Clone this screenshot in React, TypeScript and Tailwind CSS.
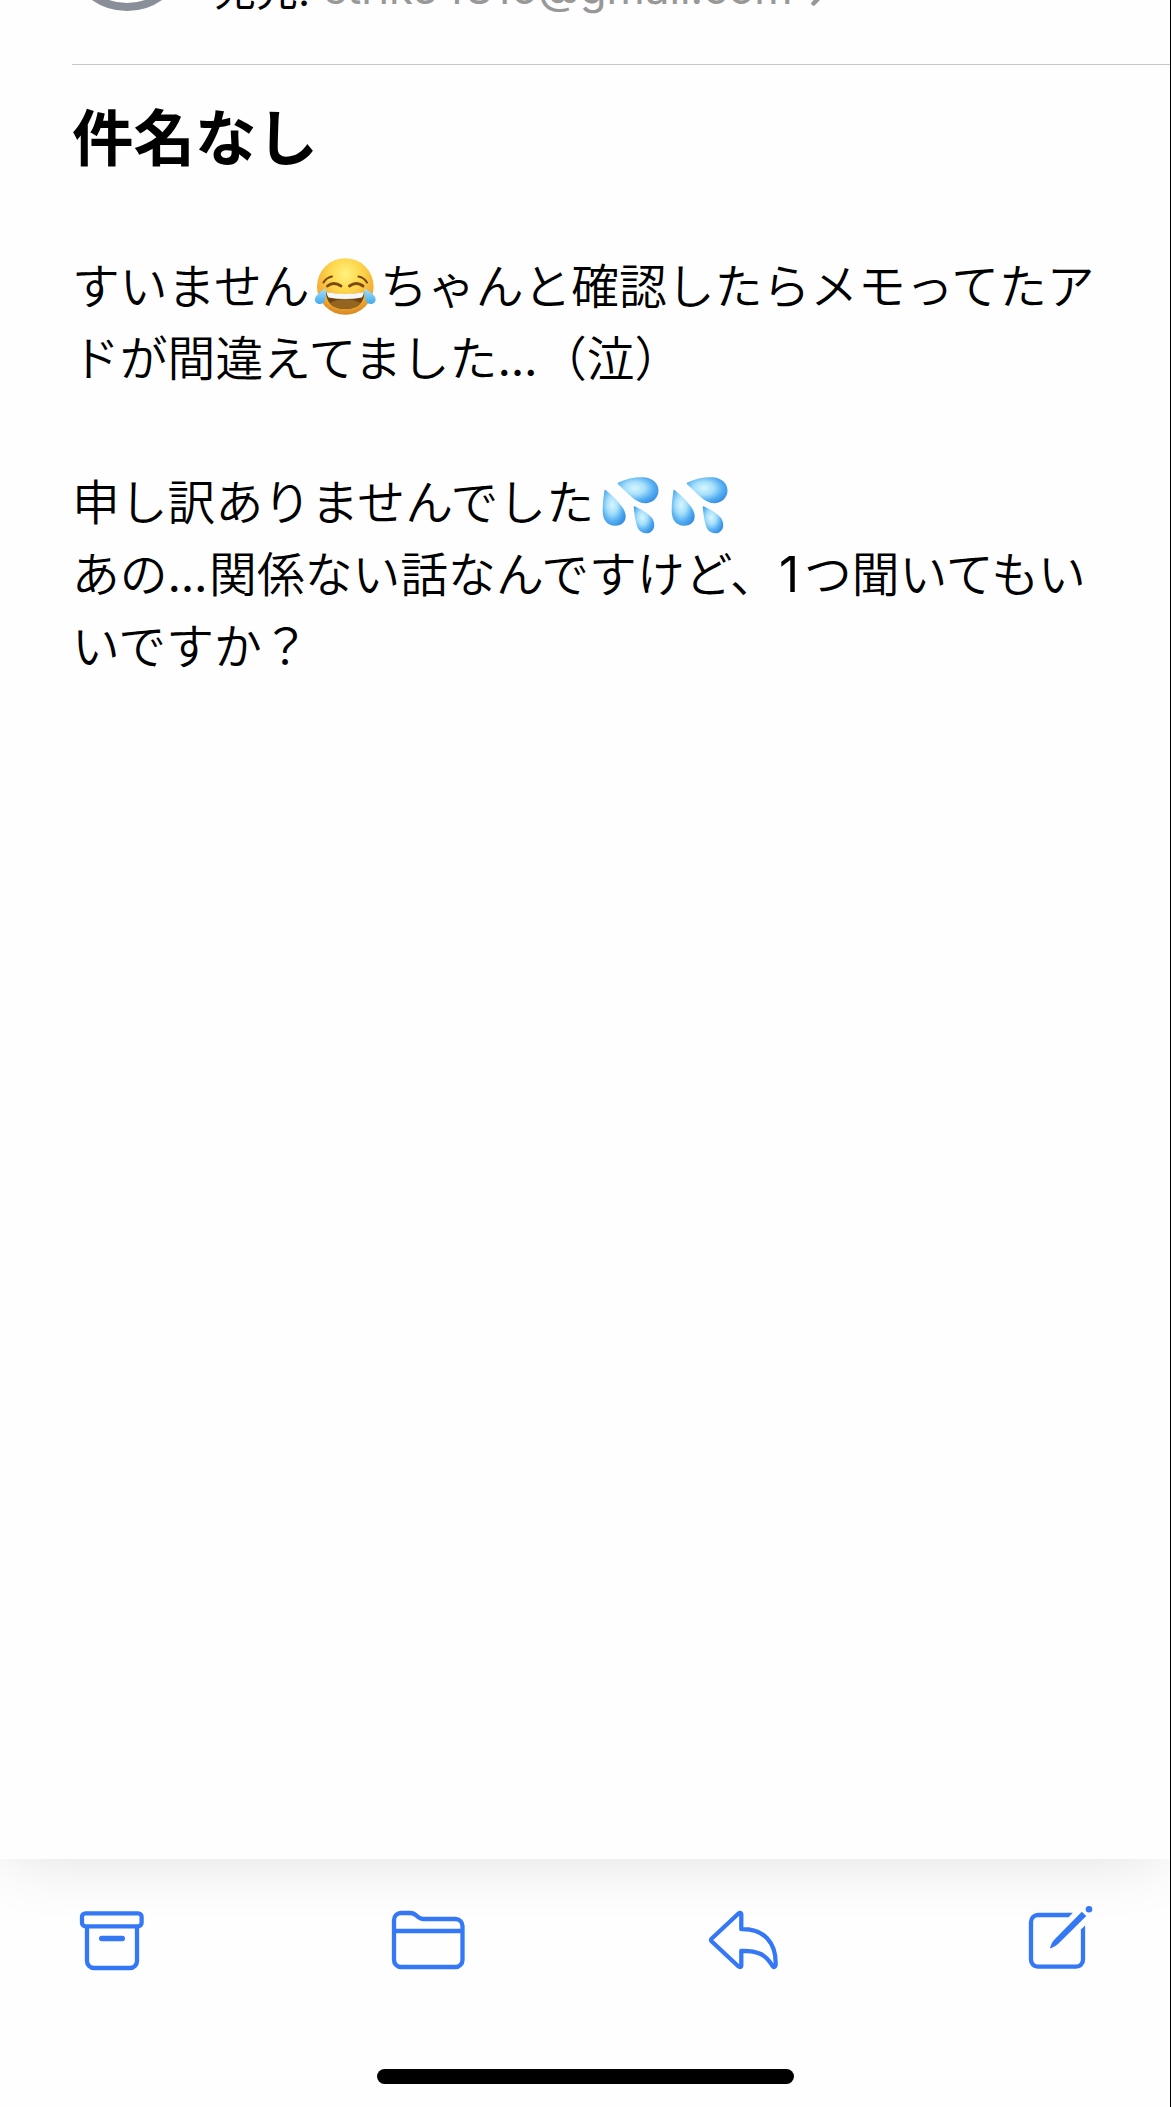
import type { ReactNode } from 'react';

interface IconProps {
  label: string;
  children: ReactNode;
}

// ツールバー用アイコンの共通枠
function ToolbarIcon({ label, children }: IconProps) {
  return (
    <button aria-label={label} className="h-[72px] w-[72px] text-[#3478f6]">
      <svg
        viewBox="0 0 72 72"
        className="h-[72px] w-[72px] overflow-visible"
        fill="none"
        stroke="currentColor"
        strokeWidth="4.3"
        strokeLinejoin="round"
      >
        {children}
      </svg>
    </button>
  );
}

function JoyEmoji() {
  return (
    <span className="inline-block h-[72px] w-[70.5px] pt-[3px] align-top">
      <svg viewBox="0 0 72 72" className="h-[72px] w-[72px]" role="img" aria-label="😂">
        <defs>
          <radialGradient id="face" cx="0.5" cy="0.28" r="0.75">
            <stop offset="0" stopColor="#fff27c" />
            <stop offset="0.4" stopColor="#fdd54a" />
            <stop offset="0.75" stopColor="#f2aa34" />
            <stop offset="1" stopColor="#d07f20" />
          </radialGradient>
          <linearGradient id="tear" x1="0" y1="0" x2="0" y2="1">
            <stop offset="0" stopColor="#a9e2fb" />
            <stop offset="1" stopColor="#3fa9ee" />
          </linearGradient>
        </defs>
        <circle cx="35.3" cy="35.5" r="28.3" fill="url(#face)" />
        <g fill="none" stroke="#7a4a12" strokeLinecap="round">
          <path d="M13.500 31.500 Q16.500 26.500 22 25.500" strokeWidth="2.100" />
          <path d="M57 31.500 Q54 26.500 48.500 25.500" strokeWidth="2.100" />
          <path d="M17.500 35 Q23.500 30 31 35" strokeWidth="2.900" />
          <path d="M39.500 35 Q46.500 30 53 35" strokeWidth="2.900" />
        </g>
        <path d="M16 41 Q35 45.500 54.500 41 Q54 57.500 35.300 58 Q16.500 57.500 16 41Z" fill="#6f430f" />
        <path d="M20 52 Q35 44 50.500 52 Q45 58 35.300 58 Q25 58 20 52Z" fill="#94651e" />
        <path d="M16.500 41 Q35 45 54 41 Q53.500 45 52 46.500 Q35 49.500 18.500 46.500 Q17 45 16.500 41Z" fill="#f4f6f8" />
        <path d="M15.500 37.500 Q17 46 14 51 Q11.500 54 7.500 52.500 Q3.500 50 5.500 46 Q8 42 15.500 37.500Z" fill="url(#tear)" />
        <path d="M55 37.500 Q53.500 46 56.500 51 Q59 54 63 52.500 Q67 50 65 46 Q62.500 42 55 37.500Z" fill="url(#tear)" />
      </svg>
    </span>
  );
}

function SweatEmoji() {
  return (
    <span className="inline-block h-[72px] w-[69px] pt-[3px] align-top">
      <svg viewBox="0 0 69 72" className="ml-px h-[72px] w-[69px]" role="img" aria-label="💦">
        <defs>
          <radialGradient id="drop" cx="0.42" cy="0.42" r="0.62">
            <stop offset="0" stopColor="#d6f6ff" />
            <stop offset="0.4" stopColor="#a6dffa" />
            <stop offset="0.75" stopColor="#55aff2" />
            <stop offset="1" stopColor="#3c92e2" />
          </radialGradient>
        </defs>
        <g fill="url(#drop)">
          <path d="M23.300 15.500 C32 11.500 41 9.700 49 10.300 C58 11 63.500 16.500 63.500 23.500 C63.500 31 57 36.500 50 36.300 C40 36 32 25 23.300 17.500 C22.500 16.700 22.500 16 23.300 15.500Z" />
          <path d="M10.300 22.800 C15.500 27 23.500 34 28.500 42 C33.500 51 29.500 58.500 20.500 58.700 C11 58.700 7.500 51.500 7.700 43 C7.800 35 8.700 29 9.500 23.300 C9.600 22.700 9.900 22.500 10.300 22.800Z" />
          <path d="M39.500 39.200 C44.500 41.500 52.500 45.500 57 51 C61.500 57.500 59 66 51.500 66.300 C45.500 66.300 42.500 62 41.200 56 C40 51 39.200 45 38.700 40 C38.700 39.300 39 39 39.500 39.200Z" />
        </g>
      </svg>
    </span>
  );
}

function Dots() {
  return (
    <span className="inline-block w-[41.5px] font-['Inter'] text-[47px] leading-none font-normal tracking-[-0.3px]">
      ...
    </span>
  );
}

export default function App() {
  return (
    <div className="flex h-[2107px] w-[1171px] flex-col overflow-hidden border-r border-black bg-[#fefefe] font-['Noto_Sans_CJK_JP',sans-serif] text-black">
      <main className="relative h-[1859px] shrink-0 bg-[#fefefe] shadow-[0_8px_60px_-8px_rgba(0,0,0,0.12)]">
        {/* 宛先 */}
        <header className="ml-[72px] flex h-[65px] items-start border-b border-[#c6c6c8]">
          <div className="-mt-[111px] ml-[-6px] h-[122px] w-[122px] shrink-0 rounded-full border-8 border-[#8a8e99]" />
          <div className="-mt-[41px] ml-[26px] flex h-[60px] items-center whitespace-nowrap text-[42px] leading-[60px]">
            <span className="w-[110px]">
              宛先<span className="font-['Inter']">:</span>
            </span>
            <span className="font-['Inter'] text-[43.7px] text-[#989898]">strike4816@gmail.com</span>
            <svg viewBox="0 0 18 32" className="mt-[2px] ml-[18px] h-[32px] w-[18px]" fill="none" stroke="#989898" strokeWidth="4.5">
              <path d="M2.500 2.500 L15.500 16 L2.500 29.500" strokeLinecap="round" strokeLinejoin="round" />
            </svg>
          </div>
        </header>

        <h1 className="mt-[25px] ml-[72px] h-[90px] text-[61.5px] leading-[90px] font-bold">件名なし</h1>

        {/* 本文 */}
        <div className="mt-[68px] ml-[72px] text-[47.8px] leading-[72px] font-[350] whitespace-nowrap">
          <p className="h-[72px]">
            すいません
            <JoyEmoji />
            ちゃんと確認したらメモってたア
          </p>
          <p className="h-[72px]">
            ドが間違えてました
            <Dots />
            （泣）
          </p>
          <p className="h-[72px]" />
          <p className="h-[72px]">
            申し訳ありませんでした
            <SweatEmoji />
            <SweatEmoji />
          </p>
          <p className="h-[72px]">
            あの
            <Dots />
            関係ない話なんですけど、
            <span className="inline-block w-[26px] pl-px font-['Inter'] text-[49.5px] leading-none font-normal">1</span>
            つ聞いてもい
          </p>
          <p className="h-[72px]">いですか？</p>
        </div>
      </main>

      <footer className="flex flex-1 flex-col items-center">
        <nav className="relative mt-[41px] flex w-full justify-between pr-[74px] pl-[76px]">
          <ToolbarIcon label="アーカイブ">
            <rect x="6" y="13.300" width="59.600" height="13" rx="3.500" />
            <path d="M11 28 V61 a7 7 0 0 0 7 7 H54 a7 7 0 0 0 7 -7 V28" />
            <path d="M25.700 38.500 H46.300" strokeWidth="5.400" strokeLinecap="round" />
          </ToolbarIcon>
          <ToolbarIcon label="フォルダ">
            <path d="M2 20 a7 7 0 0 1 7 -7 H18 C21 13 22.500 13.800 24 15.300 C26 17.300 27.500 19 31 19 H63.500 a7 7 0 0 1 7 7 V60 a7 7 0 0 1 -7 7 H9 a7 7 0 0 1 -7 -7 Z" />
            <path d="M2 31 H70.500" />
          </ToolbarIcon>
          <ToolbarIcon label="返信">
            <path d="M3.800 38.500 L30 14 Q33.300 11.500 33.300 15 V29.200 C56 28.500 68.500 43 67.600 65 Q66.500 68.500 64.500 66 C58 54.500 50 50.500 33.300 50.800 V65 Q33.300 68.500 30 66 L3.800 41.500 Q2.300 40 3.800 38.500 Z" />
          </ToolbarIcon>
          <ToolbarIcon label="新規作成">
            <path d="M44.500 15 H14 a7 7 0 0 0 -7 7 V59.700 a7 7 0 0 0 7 7 H52 a7 7 0 0 0 7 -7 V29.500" />
            <g fill="currentColor" stroke="none">
              <path d="M44 12.850 H48.850 L44.600 17.150 H44Z" />
              <path d="M61.150 25.400 V30 H56.850 V29.500Z" />
              <path d="M26 47.800 Q27.500 42.500 30 40 L57.800 11.800 L62.300 16 L34 44 Q31.500 46.500 26.600 48.400Z" />
              <circle cx="65" cy="9.200" r="3.300" />
            </g>
          </ToolbarIcon>
        </nav>
        <div className="mt-[97px] h-[15px] w-[417px] rounded-full bg-black" />
      </footer>
    </div>
  );
}
